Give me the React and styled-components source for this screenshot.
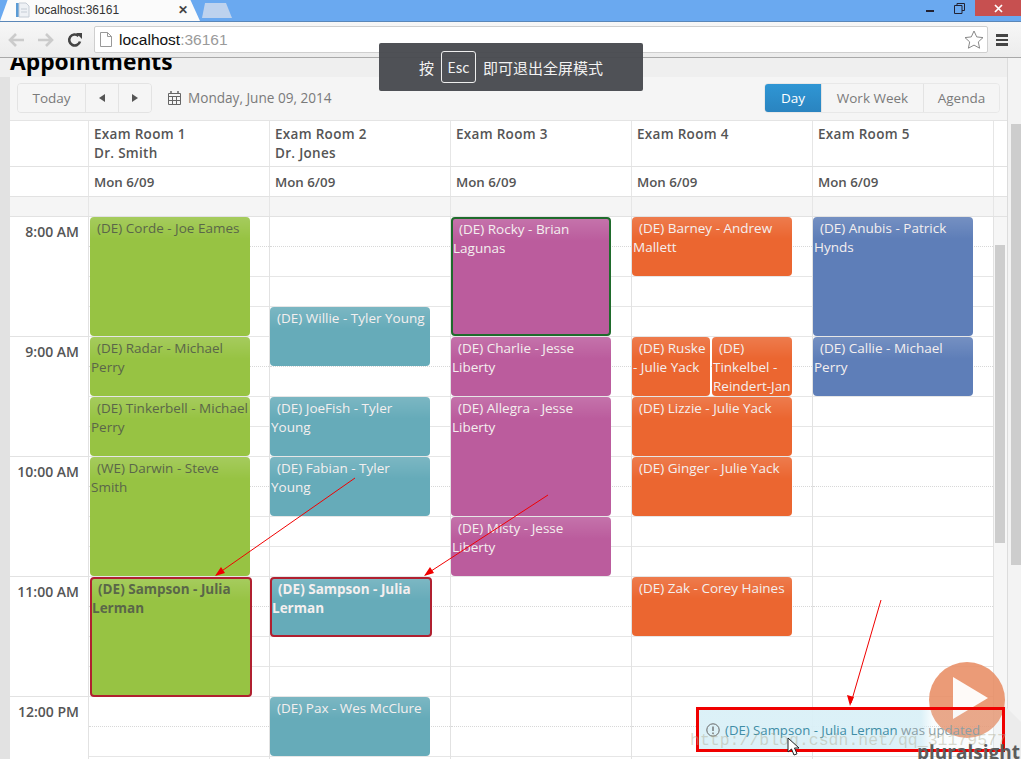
import React from 'react'
import styled, { createGlobalStyle } from 'styled-components'

const Global = createGlobalStyle`
  html, body { margin: 0; padding: 0; background: #fff; }
  * { box-sizing: border-box; }
  body { font-family: "Open Sans", "Liberation Sans", sans-serif; overflow: hidden; }
`

const Viewport = styled.div`
  position: relative;
  width: 1021px;
  height: 759px;
  overflow: hidden;
  display: flex;
  flex-direction: column;
`

/* browser chrome */
const TabStrip = styled.div`
  height: 22px;
  flex: none;
  background: #6aa9f0;
  display: flex;
  align-items: flex-end;
  border-bottom: 1px solid #5b87b8;
`
const Tab = styled.div`
  width: 200px;
  height: 22px;
  background: #fbfbfb;
  clip-path: polygon(0 100%, 8px 0, 190px 0, 200px 100%);
  display: flex;
  align-items: center;
  padding: 0 12px 0 16px;
  font: 12px "Liberation Sans", sans-serif;
  color: #333;
  gap: 5px;
`
const TabTitle = styled.span`
  flex: 1;
`
const TabClose = styled.span`
  font-size: 12px;
  color: #444;
  font-weight: 700;
`
const NewTab = styled.div`
  width: 30px;
  height: 15px;
  margin: 0 0 3px 2px;
  background: #bdd2ee;
  border-radius: 3px 3px 0 0;
  clip-path: polygon(0 100%, 3px 0, 24px 0, 30px 100%);
`
const WindowButtons = styled.div`
  margin-left: auto;
  align-self: flex-start;
  display: flex;
  align-items: center;
  height: 16px;
  color: #223;
`
const WinIcon = styled.svg`
  display: block;
  margin-right: ${p => p.$gap}px;
`
const CloseButton = styled.div`
  width: 46px;
  height: 16px;
  margin-left: 1px;
  background: #c75050;
  color: #fff;
  display: flex;
  align-items: center;
  justify-content: center;
`
const NavBar = styled.div`
  height: 36px;
  flex: none;
  background: linear-gradient(#f7f7f7, #ececec);
  border-bottom: 1px solid #a9a9a9;
  display: flex;
  align-items: center;
  padding: 0 7px 0 8px;
`
const NavIcon = styled.svg`
  display: block;
  flex: none;
  margin-right: ${p => p.$gap}px;
`
const Omnibox = styled.div`
  width: 894px;
  height: 27px;
  margin-left: 4px;
  background: #fff;
  border: 1px solid #cfcfcf;
  border-radius: 2px;
  display: flex;
  align-items: center;
  padding: 0 3px 0 5px;
  font: 15.5px "Liberation Sans", sans-serif;
  color: #111;
`
const Port = styled.span`
  color: #9a9a9a;
`
const UrlText = styled.div`
  flex: 1;
  margin-left: 7px;
`
const Burger = styled.div`
  width: 12px;
  height: 12px;
  margin-left: 8px;
  border-top: 3px solid #444;
  border-bottom: 3px solid #444;
  &::after {
    content: "";
    display: block;
    height: 2px;
    margin-top: 2px;
    background: #444;
  }
`

/* page */
const PageBody = styled.div`
  flex: 1;
  min-height: 0;
  display: flex;
`
const Content = styled.div`
  width: 1007px;
  flex: none;
  background: #e2e2e2;
  display: flex;
  flex-direction: column;
  overflow: hidden;
`
const TitleBar = styled.div`
  height: 19px;
  flex: none;
  background: #efefef;
  overflow: hidden;
`
const Title = styled.h1`
  margin: -12px 0 0 10px;
  font: 700 22.8px/32px "Open Sans", sans-serif;
  color: #000;
`
const PageScroll = styled.div`
  flex: 1;
  background: #f3f3f3;
  border-left: 1px solid #dcdcdc;
  padding: 66px 0 0 3px;
`
const PageThumb = styled.div`
  height: 441px;
  background: #cdcdcd;
`
const Scheduler = styled.div`
  margin-left: 10px;
  flex: 1;
  min-height: 0;
  display: flex;
  flex-direction: column;
  background: #fff;
  overflow: hidden;
`
const Toolbar = styled.div`
  height: 44px;
  flex: none;
  background: #f5f5f5;
  border-bottom: 1px solid #e4e4e4;
  display: flex;
  align-items: center;
  padding: 0 7px 1px 7px;
  color: #7a7a7a;
  font-size: 13.5px;
`
const ButtonGroup = styled.div`
  display: flex;
  height: 30px;
  border: 1px solid #e3e3e3;
  border-radius: 4px;
  overflow: hidden;
`
const ToolButton = styled.div`
  width: ${p => p.$w}px;
  padding-bottom: 1px;
  display: flex;
  align-items: center;
  justify-content: center;
  background: ${p => (p.$active ? 'linear-gradient(#2f96d4, #2a84c0)' : '#f5f5f5')};
  color: ${p => (p.$active ? '#fff' : '#7a7a7a')};
  & + & { border-left: 1px solid #e3e3e3; }
`
const Arrow = styled.span`
  width: 0;
  height: 0;
  border-top: 4px solid transparent;
  border-bottom: 4px solid transparent;
  ${p => (p.$left ? 'border-right: 6px solid #555;' : 'border-left: 6px solid #555;')}
`
const DateLabel = styled.div`
  margin-left: 16px;
  padding-bottom: 1px;
  display: flex;
  align-items: center;
  gap: 7px;
  font-size: 13.6px;
`
const Views = styled(ButtonGroup)`
  margin-left: auto;
  border-color: #e8e8e8;
`
const HeadRow = styled.div`
  height: ${p => p.$h}px;
  flex: none;
  display: grid;
  grid-template-columns: 78px repeat(5, 181px) 1fr;
  border-bottom: 1px solid #e2e2e2;
  background: ${p => p.$bg || '#fff'};
`
const HeadCell = styled.div`
  border-left: ${p => (p.$plain ? 'none' : '1px solid #e6e6e6')};
  padding: ${p => (p.$date ? '6px 5px 0' : '4px 5px 0')};
  font-size: ${p => (p.$date ? '13.3px' : '13.5px')};
  letter-spacing: ${p => (p.$date ? '0' : '0.3px')};
  font-weight: 600;
  line-height: 19px;
  color: #555;
  white-space: pre-line;
`
const BodyGrid = styled.div`
  flex: 1;
  min-height: 0;
  display: grid;
  grid-template-columns: 78px repeat(5, 181px) 1fr;
  overflow: hidden;
`
const TimeColumn = styled.div``
const TimeCell = styled.div`
  height: 120px;
  border-bottom: 1px solid #e2e2e2;
  padding: 5px 9px 0 0;
  text-align: right;
  font-size: 14px;
  font-weight: 600;
  line-height: 19px;
  color: #555;
`
const DayColumn = styled.div`
  display: grid;
  grid-template-columns: ${p => p.$inset}px 1fr 1fr ${p => 20 - p.$inset}px;
  grid-auto-rows: 30px;
  border-left: 1px solid #e2e2e2;
`
const Slot = styled.div`
  grid-column: 1 / -1;
  grid-row: ${p => p.$row};
  border-bottom: 1px ${p => (p.$dotted ? 'dotted #d8d8d8' : 'solid #e6e6e6')};
`
const tones = {
  green: '#97c343',
  teal: '#66abb9',
  purple: '#bb5c9d',
  orange: '#eb6630',
  blue: '#5e7eb8',
}
const Event = styled.div`
  grid-row: ${p => p.$row} / span ${p => p.$span};
  grid-column: ${p => (p.$half === 1 ? '2 / 3' : p.$half === 2 ? '3 / 4' : '2 / 4')};
  z-index: 1;
  margin-bottom: ${p => (p.$border === 'red' ? '0' : '1px')};
  margin-right: ${p => (p.$half === 1 ? '2px' : p.$border === 'red' ? '-2px' : '0')};
  padding: ${p => (p.$border ? '1px 0 0' : '2px 1px 0')};
  background: linear-gradient(rgba(255, 255, 255, 0.14), rgba(255, 255, 255, 0) 22px), ${p => tones[p.$tone]};
  border: ${p => (p.$border === 'red' ? '2px solid #b02030' : p.$border === 'dkgreen' ? '2px solid #1f6b2c' : 'none')};
  border-radius: 4px;
  color: ${p => (p.$tone === 'green' ? '#5a6649' : '#f4efef')};
  font-size: 13.5px;
  font-weight: ${p => (p.$bold ? 700 : 400)};
  line-height: 19px;
  text-indent: 6px;
  overflow: hidden;
`
const ScrollGutter = styled.div`
  background: #f6f6f6;
  border-left: 1px solid #e2e2e2;
  padding: 28px 2px 0 1px;
`
const ScrollThumb = styled.div`
  width: 10px;
  height: 298px;
  background: #cdcdcd;
`

/* things lying over the page */
const FullscreenToast = styled.div`
  position: absolute;
  left: 379px;
  top: 43px;
  width: 264px;
  height: 48px;
  background: rgba(72, 74, 79, 0.96);
  border-radius: 2px;
  color: #f2f2f2;
  display: flex;
  align-items: center;
  justify-content: center;
  gap: 7px;
  font: 15px "Noto Sans CJK SC", sans-serif;
`
const EscKey = styled.span`
  width: 35px;
  height: 32px;
  border: 1px solid #eee;
  border-radius: 3px;
  font-size: 14px;
  display: flex;
  align-items: center;
  justify-content: center;
`
const Annotations = styled.svg`
  position: absolute;
  left: 0;
  top: 0;
  z-index: 5;
  pointer-events: none;
`
const Logo = styled.svg`
  position: absolute;
  right: 0;
  bottom: 0;
  z-index: 3;
`
const LogoText = styled.div`
  position: absolute;
  left: 917px;
  bottom: -3px;
  z-index: 4;
  font: 700 19px/20px "Open Sans", sans-serif;
  color: #5c5c5c;
  white-space: nowrap;
`
const Notification = styled.div`
  position: absolute;
  left: 696px;
  top: 707px;
  width: 309px;
  height: 45px;
  z-index: 4;
  border: 3px solid #f00000;
  background: linear-gradient(90deg, rgba(218, 240, 247, 0.95) 222px, rgba(218, 240, 247, 0.15) 234px);
  display: flex;
  align-items: center;
  gap: 5px;
  padding: 1px 0 0 7px;
  font-size: 13.2px;
  color: #3f8da6;
  white-space: nowrap;
`
const Muted = styled.span`
  color: #8b9ea5;
`
const Watermark = styled.div`
  position: absolute;
  left: 690px;
  top: 731px;
  z-index: 5;
  font: 16.5px "Liberation Mono", monospace;
  color: rgba(175, 172, 145, 0.45);
  white-space: nowrap;
`
const Cursor = styled.svg`
  position: absolute;
  left: 787px;
  top: 737px;
  z-index: 6;
`

const columns = [
  {
    head: 'Exam Room 1\nDr. Smith',
    inset: 1,
    tone: 'green',
    events: [
      { row: 1, span: 4, text: '(DE) Corde - Joe Eames' },
      { row: 5, span: 2, text: '(DE) Radar - Michael Perry' },
      { row: 7, span: 2, text: '(DE) Tinkerbell - Michael Perry' },
      { row: 9, span: 4, text: '(WE) Darwin - Steve Smith' },
      { row: 13, span: 4, text: '(DE) Sampson - Julia Lerman', bold: true, border: 'red' },
    ],
  },
  {
    head: 'Exam Room 2\nDr. Jones',
    inset: 0,
    tone: 'teal',
    events: [
      { row: 4, span: 2, text: '(DE) Willie - Tyler Young' },
      { row: 7, span: 2, text: '(DE) JoeFish - Tyler Young' },
      { row: 9, span: 2, text: '(DE) Fabian - Tyler Young' },
      { row: 13, span: 2, text: '(DE) Sampson - Julia Lerman', bold: true, border: 'red' },
      { row: 17, span: 2, text: '(DE) Pax - Wes McClure' },
    ],
  },
  {
    head: 'Exam Room 3',
    inset: 0,
    tone: 'purple',
    events: [
      { row: 1, span: 4, text: '(DE) Rocky - Brian Lagunas', border: 'dkgreen' },
      { row: 5, span: 2, text: '(DE) Charlie - Jesse Liberty' },
      { row: 7, span: 4, text: '(DE) Allegra - Jesse Liberty' },
      { row: 11, span: 2, text: '(DE) Misty - Jesse Liberty' },
    ],
  },
  {
    head: 'Exam Room 4',
    inset: 0,
    tone: 'orange',
    events: [
      { row: 1, span: 2, text: '(DE) Barney - Andrew Mallett' },
      { row: 5, span: 2, half: 1, text: '(DE) Ruske - Julie Yack' },
      { row: 5, span: 2, half: 2, text: '(DE) Tinkelbel - Reindert-Jan' },
      { row: 7, span: 2, text: '(DE) Lizzie - Julie Yack' },
      { row: 9, span: 2, text: '(DE) Ginger - Julie Yack' },
      { row: 13, span: 2, text: '(DE) Zak - Corey Haines' },
    ],
  },
  {
    head: 'Exam Room 5',
    inset: 0,
    tone: 'blue',
    events: [
      { row: 1, span: 4, text: '(DE) Anubis - Patrick Hynds' },
      { row: 5, span: 2, text: '(DE) Callie - Michael Perry' },
    ],
  },
]

const hours = ['8:00 AM', '9:00 AM', '10:00 AM', '11:00 AM', '12:00 PM']
const slots = Array.from({ length: 20 }, (_, i) => i + 1)

function Chrome() {
  return (
    <>
      <TabStrip>
        <Tab>
          <svg width="14" height="16" viewBox="0 0 14 16">
            <rect x="0" y="1" width="3" height="14" fill="#5b9bd5" />
            <path d="M3 1h7l3 3v11H3z" fill="#eef1f5" stroke="#c5ccd5" />
            <path d="M5 7h6M5 10h6" stroke="#c5ccd5" />
          </svg>
          <TabTitle>localhost:36161</TabTitle>
          <TabClose>✕</TabClose>
        </Tab>
        <NewTab />
        <WindowButtons>
          <WinIcon $gap={19} width="10" height="10" viewBox="0 0 10 10">
            <rect x="1" y="7" width="8" height="2" fill="#223" />
          </WinIcon>
          <WinIcon $gap={9} width="11" height="11" viewBox="0 0 11 11">
            <path d="M3 2.500V.5h7.500v7H8M.5 2.500h7.500v8H.5z" fill="none" stroke="#223" />
          </WinIcon>
          <CloseButton>
            <svg width="9" height="9" viewBox="0 0 9 9">
              <path d="M1 1l7 7M8 1L1 8" stroke="#fff" strokeWidth="1.700" />
            </svg>
          </CloseButton>
        </WindowButtons>
      </TabStrip>
      <NavBar>
        <NavIcon $gap={12} width="17" height="14" viewBox="0 0 17 14">
          <path d="M8 1L2 7l6 6M2 7h14" fill="none" stroke="#cbcbcb" strokeWidth="2.600" />
        </NavIcon>
        <NavIcon $gap={13} width="17" height="14" viewBox="0 0 17 14">
          <path d="M9 1l6 6-6 6M15 7H1" fill="none" stroke="#cbcbcb" strokeWidth="2.600" />
        </NavIcon>
        <NavIcon $gap={7} width="16" height="16" viewBox="0 0 16 16">
          <path d="M13 9.500A5.500 5.500 0 1 1 11.500 4" fill="none" stroke="#444" strokeWidth="2.600" />
          <path d="M9 1h6v6z" fill="#444" />
        </NavIcon>
        <Omnibox>
          <svg width="12" height="15" viewBox="0 0 12 15">
            <path d="M.5.5h7l4 4v10H.5zM7.500.5v4h4" fill="#fff" stroke="#999" />
          </svg>
          <UrlText>
            localhost<Port>:36161</Port>
          </UrlText>
          <svg width="20" height="19" viewBox="0 0 20 19">
            <path
              d="M10 1l2.700 5.900 6.300.7-4.700 4.300 1.300 6.300L10 15.100 4.400 18.200l1.300-6.300L1 7.600l6.300-.7z"
              fill="#fff"
              stroke="#888"
            />
          </svg>
        </Omnibox>
        <Burger />
      </NavBar>
    </>
  )
}

function CalendarIcon() {
  return (
    <svg width="13" height="14" viewBox="0 0 13 14">
      <path d="M.5 2.500h12v11H.5zM.5 5.500h12M4.500 5.500v8M8.500 5.500v8M.5 9.500h12" fill="none" stroke="#666" />
      <path d="M3 0v3M10 0v3" stroke="#666" strokeWidth="1.500" />
    </svg>
  )
}

function App() {
  return (
    <Viewport>
      <Global />
      <Chrome />
      <PageBody>
        <Content>
          <TitleBar>
            <Title>Appointments</Title>
          </TitleBar>
          <Scheduler>
            <Toolbar>
              <ButtonGroup>
                <ToolButton $w={67}>Today</ToolButton>
                <ToolButton $w={33}>
                  <Arrow $left />
                </ToolButton>
                <ToolButton $w={33}>
                  <Arrow />
                </ToolButton>
              </ButtonGroup>
              <DateLabel>
                <CalendarIcon />
                Monday, June 09, 2014
              </DateLabel>
              <Views>
                <ToolButton $w={56} $active>Day</ToolButton>
                <ToolButton $w={102}>Work Week</ToolButton>
                <ToolButton $w={76}>Agenda</ToolButton>
              </Views>
            </Toolbar>
            <HeadRow $h={46}>
              <HeadCell $plain />
              {columns.map(c => (
                <HeadCell key={c.head}>{c.head}</HeadCell>
              ))}
              <HeadCell />
            </HeadRow>
            <HeadRow $h={30}>
              <HeadCell $plain />
              {columns.map(c => (
                <HeadCell key={c.head} $date>Mon 6/09</HeadCell>
              ))}
              <HeadCell />
            </HeadRow>
            <HeadRow $h={20} $bg="#f5f5f5">
              <HeadCell $plain />
              {columns.map(c => (
                <HeadCell key={c.head} />
              ))}
              <HeadCell />
            </HeadRow>
            <BodyGrid>
              <TimeColumn>
                {hours.map(h => (
                  <TimeCell key={h}>{h}</TimeCell>
                ))}
              </TimeColumn>
              {columns.map(c => (
                <DayColumn key={c.head} $inset={c.inset}>
                  {slots.map(s => (
                    <Slot key={s} $row={s} $dotted={s % 4 === 1} />
                  ))}
                  {c.events.map(e => (
                    <Event
                      key={e.text}
                      $row={e.row}
                      $span={e.span}
                      $half={e.half}
                      $tone={c.tone}
                      $bold={e.bold}
                      $border={e.border}
                    >
                      {e.text}
                    </Event>
                  ))}
                </DayColumn>
              ))}
              <ScrollGutter>
                <ScrollThumb />
              </ScrollGutter>
            </BodyGrid>
          </Scheduler>
        </Content>
        <PageScroll>
          <PageThumb />
        </PageScroll>
      </PageBody>

      <FullscreenToast>
        按<EscKey>Esc</EscKey>即可退出全屏模式
      </FullscreenToast>

      <Logo width="110" height="105" viewBox="0 0 110 105">
        <path d="M94 52L110 68V105H89z" fill="#ececec" />
        <circle cx="56" cy="46" r="38" fill="#e88a5f" opacity="0.85" />
        <path d="M42 23L77 44L42 65z" fill="#fff" opacity="0.95" />
      </Logo>
      <Notification>
        <svg width="14" height="14" viewBox="0 0 14 14">
          <circle cx="7" cy="7" r="6.200" fill="none" stroke="#666" />
          <path d="M7 3.500v4.500M7 9.500v1.500" stroke="#666" strokeWidth="1.300" />
        </svg>
        <span>
          (DE) Sampson - Julia Lerman <Muted>was updated</Muted>
        </span>
      </Notification>
      <LogoText>pluralsight</LogoText>
      <Watermark>http://blog.csdn.net/qq_31179577</Watermark>

      <Annotations width="1021" height="759" viewBox="0 0 1021 759">
        <path d="M355 478L216 575M548 495L425 575M881 600L851 703" fill="none" stroke="#f00000" />
        <path d="M215 576l6-9 4 6zM424 576l6-9 4 6zM850 706l-3-11 7 2z" fill="#f00000" />
      </Annotations>
      <Cursor width="14" height="19" viewBox="0 0 14 19">
        <path d="M1 1v14l3.500-3 2.500 6 3-1.200-2.500-5.800H12z" fill="#fff" stroke="#222" />
      </Cursor>
    </Viewport>
  )
}

export default App
